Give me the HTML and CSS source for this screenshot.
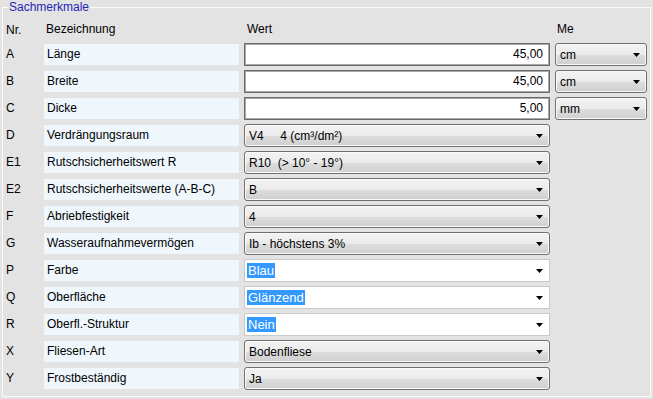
FILE: index.html
```html
<!DOCTYPE html>
<html lang="de">
<head>
<meta charset="utf-8">
<title>Sachmerkmale</title>
<link rel="stylesheet" href="styles.css">
</head>
<body>
<div class="group">
  <span class="legend">Sachmerkmale</span>
  <div class="grid">
    <div class="hd nr">Nr.</div>
    <div class="hd bez">Bezeichnung</div>
    <div class="hd wert">Wert</div>
    <div class="hd me">Me</div>

    <div class="nr">A</div><div class="lbl">Länge</div>
    <div class="txt">45,00</div>
    <div class="cmb unit"><span>cm</span><svg class="arr" width="7" height="4" viewBox="0 0 7 4"><path d="M0 0h7L3.5 4z"/></svg></div>

    <div class="nr">B</div><div class="lbl">Breite</div>
    <div class="txt">45,00</div>
    <div class="cmb unit"><span>cm</span><svg class="arr" width="7" height="4" viewBox="0 0 7 4"><path d="M0 0h7L3.5 4z"/></svg></div>

    <div class="nr">C</div><div class="lbl">Dicke</div>
    <div class="txt">5,00</div>
    <div class="cmb unit"><span>mm</span><svg class="arr" width="7" height="4" viewBox="0 0 7 4"><path d="M0 0h7L3.5 4z"/></svg></div>

    <div class="nr">D</div><div class="lbl">Verdrängungsraum</div>
    <div class="cmb wide"><span class="pre">V4     4 (cm³/dm²)</span><svg class="arr" width="7" height="4" viewBox="0 0 7 4"><path d="M0 0h7L3.5 4z"/></svg></div>

    <div class="nr">E1</div><div class="lbl">Rutschsicherheitswert R</div>
    <div class="cmb wide"><span class="pre">R10  (&gt; 10° - 19°)</span><svg class="arr" width="7" height="4" viewBox="0 0 7 4"><path d="M0 0h7L3.5 4z"/></svg></div>

    <div class="nr">E2</div><div class="lbl">Rutschsicherheitswerte (A-B-C)</div>
    <div class="cmb wide"><span>B</span><svg class="arr" width="7" height="4" viewBox="0 0 7 4"><path d="M0 0h7L3.5 4z"/></svg></div>

    <div class="nr">F</div><div class="lbl">Abriebfestigkeit</div>
    <div class="cmb wide"><span>4</span><svg class="arr" width="7" height="4" viewBox="0 0 7 4"><path d="M0 0h7L3.5 4z"/></svg></div>

    <div class="nr">G</div><div class="lbl">Wasseraufnahmevermögen</div>
    <div class="cmb wide"><span>Ib - höchstens 3%</span><svg class="arr" width="7" height="4" viewBox="0 0 7 4"><path d="M0 0h7L3.5 4z"/></svg></div>

    <div class="nr">P</div><div class="lbl">Farbe</div>
    <div class="edit wide"><span class="sel">Blau</span><svg class="arr" width="7" height="4" viewBox="0 0 7 4"><path d="M0 0h7L3.5 4z"/></svg></div>

    <div class="nr">Q</div><div class="lbl">Oberfläche</div>
    <div class="edit wide"><span class="sel">Glänzend</span><svg class="arr" width="7" height="4" viewBox="0 0 7 4"><path d="M0 0h7L3.5 4z"/></svg></div>

    <div class="nr">R</div><div class="lbl">Oberfl.-Struktur</div>
    <div class="edit wide"><span class="sel">Nein</span><svg class="arr" width="7" height="4" viewBox="0 0 7 4"><path d="M0 0h7L3.5 4z"/></svg></div>

    <div class="nr">X</div><div class="lbl">Fliesen-Art</div>
    <div class="cmb wide"><span>Bodenfliese</span><svg class="arr" width="7" height="4" viewBox="0 0 7 4"><path d="M0 0h7L3.5 4z"/></svg></div>

    <div class="nr">Y</div><div class="lbl">Frostbeständig</div>
    <div class="cmb wide"><span>Ja</span><svg class="arr" width="7" height="4" viewBox="0 0 7 4"><path d="M0 0h7L3.5 4z"/></svg></div>
  </div>
</div>
</body>
</html>
```

FILE: styles.css
```css
html, body {
  margin: 0;
  padding: 0;
  background: #e3e3e3;
}
body {
  font-family: "Liberation Sans", Arial, sans-serif;
  font-size: 12px;
  color: #000;
  width: 653px;
  height: 399px;
  overflow: hidden;
}
.group {
  position: relative;
  box-sizing: border-box;
  margin: 7px 2px 0 2px;
  height: 390px;
  border: 1px solid #fbfbfb;
  padding: 11px 0 0 3px;
}
.legend {
  position: absolute;
  left: 5px;
  top: -8px;
  padding: 0 1px;
  line-height: 15px;
  background: #e3e3e3;
  color: #2525b5;
}
.grid {
  display: grid;
  grid-template-columns: 33px 195px 306px 92px;
  grid-template-rows: 20px repeat(13, 23px);
  column-gap: 5px;
  row-gap: 4px;
}
.hd {
  line-height: 20px;
  white-space: nowrap;
}
.bez { padding-left: 2px; }
.wert { padding-left: 3px; }
.me { padding-left: 2px; grid-column: 4; }
.nr {
  grid-column: 1;
  line-height: 23px;
}
.lbl {
  grid-column: 2;
  align-self: center;
  height: 21px;
  line-height: 21px;
  padding-left: 3px;
  background: #eff7fd;
  white-space: nowrap;
}
.txt {
  grid-column: 3;
  box-sizing: border-box;
  height: 23px;
  border: 1px solid #6a6a6a;
  box-shadow: inset 0 0 0 1px #a8a8a8;
  background: #fff;
  text-align: right;
  padding-right: 6px;
  line-height: 21px;
}
.cmb, .edit {
  box-sizing: border-box;
  height: 23px;
  display: flex;
  align-items: center;
  justify-content: space-between;
  padding: 0 6px 0 4px;
  white-space: nowrap;
}
.cmb {
  border: 1px solid #707070;
  border-radius: 3px;
  background: linear-gradient(#f3f3f3 0%, #ebebeb 50%, #dddddd 51%, #cfcfcf 100%);
  box-shadow: inset 0 0 0 1px #fafafa;
}
.edit {
  border: 1px solid #c9c9c9;
  background: #fff;
  padding-left: 2px;
}
.wide { grid-column: 3; }
.unit { grid-column: 4; padding-left: 4px; }
.pre { white-space: pre; }
.sel {
  background: #3399ff;
  color: #fff;
  padding: 0 1px;
  line-height: 15px;
  font-size: 13px;
}
.arr { flex: none; fill: #000; }
```
